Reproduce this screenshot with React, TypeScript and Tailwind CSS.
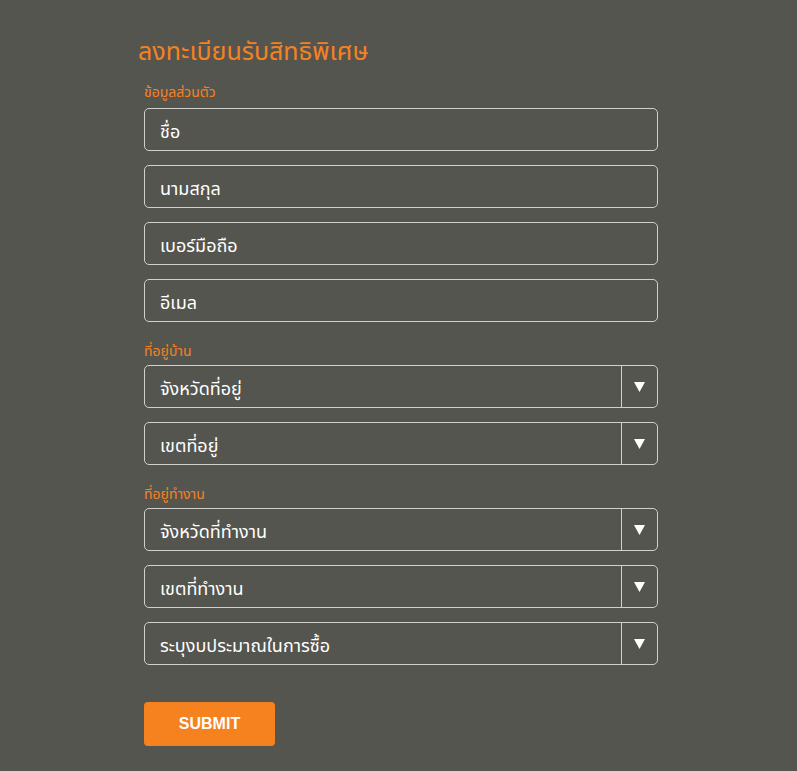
import React from "react";

const Field = ({ placeholder }: { placeholder: string }) => (
  <div className="h-[43px] w-full rounded-[5px] border border-[#d0d0cc] flex items-center px-[15px] pt-[5px] text-[18px] text-white">
    {placeholder}
  </div>
);

const Select = ({ placeholder }: { placeholder: string }) => (
  <div className="h-[43px] w-full rounded-[5px] border border-[#d0d0cc] flex items-stretch text-[18px] text-white">
    <div className="flex-1 flex items-center px-[15px] pt-[5px]">{placeholder}</div>
    <div className="w-[36px] border-l border-[#d0d0cc] flex items-center justify-center">
      <svg width="11" height="10" viewBox="0 0 11 10">
        <path d="M0 0 H11 L5.5 10 Z" fill="#ffffff" />
      </svg>
    </div>
  </div>
);

const Label = ({ children, className = "" }: { children: React.ReactNode; className?: string }) => (
  <div className={`text-[14px] leading-[18px] text-[#f5821f] ${className}`}>{children}</div>
);

export default function App() {
  return (
    <div
      className="min-h-[771px] w-full bg-[#55554f]"
      style={{ fontFamily: '"Noto Sans Thai", "Noto Sans", "DejaVu Sans", sans-serif' }}
    >
      <div className="w-[520px] ml-[138px] pt-[36px]">
        <h1 className="text-[25px] leading-[32px] text-[#f5821f] mb-[16px]">ลงทะเบียนรับสิทธิพิเศษ</h1>
        <div className="pl-[6px] flex flex-col">
          <Label className="mb-[6px]">ข้อมูลส่วนตัว</Label>
          <div className="flex flex-col gap-[14px]">
            <Field placeholder="ชื่อ" />
            <Field placeholder="นามสกุล" />
            <Field placeholder="เบอร์มือถือ" />
            <Field placeholder="อีเมล" />
          </div>
          <Label className="mt-[21px] mb-[4px]">ที่อยู่บ้าน</Label>
          <div className="flex flex-col gap-[14px]">
            <Select placeholder="จังหวัดที่อยู่" />
            <Select placeholder="เขตที่อยู่" />
          </div>
          <Label className="mt-[21px] mb-[4px]">ที่อยู่ทำงาน</Label>
          <div className="flex flex-col gap-[14px]">
            <Select placeholder="จังหวัดที่ทำงาน" />
            <Select placeholder="เขตที่ทำงาน" />
            <Select placeholder="ระบุงบประมาณในการซื้อ" />
          </div>
          <button
            className="mt-[37px] w-[131px] h-[44px] rounded-[4px] bg-[#f5821f] text-white text-[16px] font-bold"
            style={{ fontFamily: '"Liberation Sans", Arial, sans-serif' }}
          >
            SUBMIT
          </button>
        </div>
      </div>
    </div>
  );
}
